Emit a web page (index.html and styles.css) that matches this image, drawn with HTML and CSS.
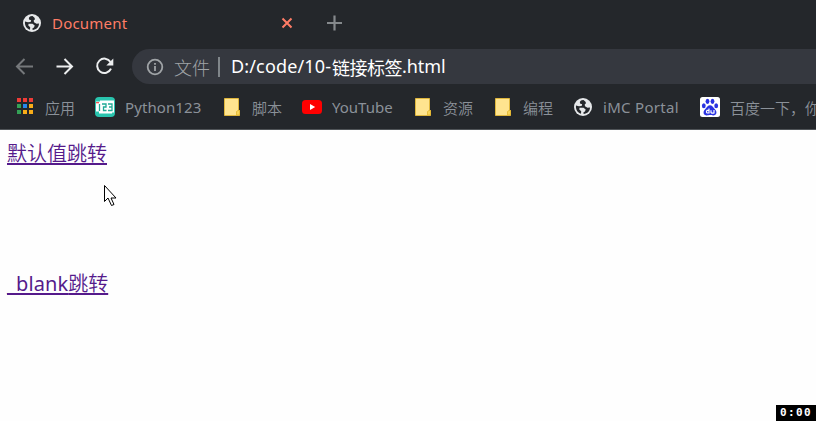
FILE: index.html
```html
<!DOCTYPE html>
<html lang="zh-CN">
<head>
<meta charset="utf-8">
<title>Document</title>
<link rel="stylesheet" href="styles.css">
</head>
<body>
<svg class="defs" width="0" height="0">
  <symbol id="globe" viewBox="0 0 20 20">
    <circle cx="10" cy="10" r="9" fill="#e6e8ea"/>
    <path d="M10.500 3C7.500 3 6.500 4.500 7 6.500L9.200 7.200L8.600 9L6 9.200L3 8.500C2.500 12.500 4.500 15.500 8 16.700L8.200 14.300L6.300 12.500L6.500 10.800L10.500 10.800L12.700 12.500L12 14.500L10.500 15.200L10.600 17C14.500 16.800 17 13.800 17 10.500L14.500 10.800L12 9.300L11.700 7.600L13 6.200L12.500 4.800Z" fill="#24272b"/>
  </symbol>
  <symbol id="folder" viewBox="0 0 20 20">
    <path d="M2.500 1.500h14v12h1v5h-15z" fill="#ffe48f" stroke="#dfb63c"/>
    <path d="M14.500 18v-3.500l1.500-1h1.500V18z" fill="#f8d558" stroke="#e3b62e" stroke-width=".8"/>
  </symbol>
</svg>
<header class="browser">
  <div class="tabs">
    <svg class="tab-icon"><use href="#globe"/></svg>
    <span class="tab-title">Document</span>
    <svg class="close" viewBox="0 0 12 12"><path d="M1.500 1.500l9 9m0-9l-9 9"/></svg>
    <svg class="plus" viewBox="0 0 16 16"><path d="M8.500 .5v15M1 8h15"/></svg>
  </div>
  <div class="toolbar">
    <svg class="nav dim" viewBox="0 0 20 20"><path d="M18 9.500H3M9.500 2L2 9.500L9.500 17"/></svg>
    <svg class="nav" viewBox="0 0 20 20"><path d="M1.500 9.500h15M9.500 2L17 9.500L9.500 17"/></svg>
    <svg class="nav" viewBox="0 0 20 20"><path d="M15.500 5A7.200 7.200 0 1 0 16 11.700"/><path class="tip" d="M18.300 1.500v7h-7z"/></svg>
    <div class="address">
      <svg class="info" viewBox="0 0 18 18"><circle cx="9" cy="9" r="7.300"/><path d="M9 8v5M9 5v1.800"/></svg>
      <span class="scheme">文件</span><span class="bar"></span><span class="url"><span class="path">D:/code/10-</span><span class="name">链接标签</span><span class="ext">.html</span></span>
    </div>
  </div>
  <nav class="bookmarks">
    <div class="mark"><svg viewBox="0 0 20 20"><path fill="#ee3c37" d="M2 1h4v4H2zM8 1h4v4H8zM14 1h4v4h-4z"/><path fill="#34a156" d="M2 7h4v4H2zM2 13h4v4H2z"/><path fill="#2787ee" d="M8 7h4v4H8z"/><path fill="#f9ad18" d="M14 7h4v4h-4zM8 13h4v4H8zM14 13h4v4h-4z"/></svg><span class="w-cjk">应用</span></div>
    <div class="mark"><svg viewBox="0 0 20 20"><rect width="20" height="20" rx="4" fill="#29c4ae"/><path d="M1 4.500h4v-1h14v12h-2v1H4v-2H1z" fill="#fff"/><path d="M4.500 7v7M7 7h4v3H8.500v3.500h3M13 7h4v6.500h-4M14 10h3" fill="none" stroke="#20a995" stroke-width="1.300"/><path d="M1 5h3v1.300H1z" fill="#f05a55"/></svg><span class="w-python">Python123</span></div>
    <div class="mark"><svg><use href="#folder"/></svg><span class="w-cjk">脚本</span></div>
    <div class="mark"><svg viewBox="0 0 20 20"><rect y="3" width="20" height="14" rx="3.500" fill="#f00"/><path d="M8 7l5.200 3L8 13z" fill="#fff"/></svg><span class="w-youtube">YouTube</span></div>
    <div class="mark"><svg><use href="#folder"/></svg><span class="w-cjk">资源</span></div>
    <div class="mark"><svg><use href="#folder"/></svg><span class="w-cjk">编程</span></div>
    <div class="mark"><svg><use href="#globe"/></svg><span class="w-imc">iMC Portal</span></div>
    <div class="mark"><svg viewBox="0 0 20 20"><rect width="20" height="20" rx="2.500" fill="#fff"/><g fill="#2932e1"><ellipse cx="3.800" cy="8.800" rx="1.900" ry="2.500"/><ellipse cx="7.500" cy="4.300" rx="1.900" ry="2.600"/><ellipse cx="12.500" cy="4.300" rx="1.900" ry="2.600"/><ellipse cx="16.200" cy="8.800" rx="1.900" ry="2.500"/><path d="M10 8.300c2 0 2.800 1.900 4.200 3.100c3.800 3.200 2.300 7-1 7c-1.300 0-2-.4-3.200-.4s-1.900.4-3.200.4c-3.300 0-4.800-3.800-1-7C7.200 10.200 8 8.300 10 8.300z"/></g><path d="M9 11.500V16H7.200Q5.700 14.700 7.200 13.300H9M11 13.200V15.500Q12.200 16.600 14 16v-3" fill="none" stroke="#fff" stroke-width="1.200"/></svg><span>百度一下，你</span></div>
  </nav>
</header>
<main class="page">
  <a href="#">默认值跳转</a>
  <a href="#"><span class="latin">_blank</span>跳转</a>
</main>
<svg class="cursor" viewBox="0 0 14 22"><path d="M1.500 1.500v16l3.500-3.500l3.500 7.500l2.500-1l-3-6.500h5z"/></svg>
<div class="timer">0:00</div>
</body>
</html>
```
FILE: styles.css
```css
* { box-sizing: border-box; }
body {
  margin: 0;
  width: 816px;
  height: 421px;
  overflow: hidden;
  background: #fefefe;
  font-family: "Noto Sans", "Noto Sans CJK SC", sans-serif;
}
svg { display: block; flex: none; }
.defs { position: absolute; }
.browser {
  height: 130px;
  background: #24272b;
  border-bottom: 1px solid #505458;
  overflow: hidden;
}
.tabs {
  display: flex;
  align-items: center;
  height: 46px;
  padding-left: 22px;
}
.tab-icon { width: 20px; height: 20px; }
.tab-title {
  width: 229px;
  margin-left: 10px;
  color: #ff7c66;
  font-size: 15px;
  letter-spacing: .2px;
}
.close { width: 12px; height: 12px; }
.close path { stroke: #ff7c66; stroke-width: 2; }
.plus { width: 16px; height: 16px; margin-left: 33px; }
.plus path { stroke: #85898c; stroke-width: 2.200; }
.toolbar {
  display: flex;
  align-items: center;
  height: 41px;
  padding-left: 15px;
}
.nav {
  width: 20px;
  height: 20px;
  margin-right: 20px;
  fill: none;
  stroke: #eceeef;
  stroke-width: 2;
}
.nav.dim { stroke: #75787b; }
.nav .tip { fill: #eceeef; stroke: none; }
.nav:nth-child(3) { margin-right: 17px; }
.address {
  display: flex;
  align-items: center;
  flex: 1;
  height: 35px;
  padding-left: 14px;
  border-radius: 18px 0 0 18px;
  background: #35383f;
  font-size: 18px;
  white-space: nowrap;
}
.info {
  width: 18px;
  height: 18px;
  margin-right: 10px;
  fill: none;
  stroke: #a0a4a7;
  stroke-width: 1.800;
}
.scheme { width: 44px; color: #a0a4a7; font-weight: 300; }
.bar { width: 2px; height: 20px; background: #80868a; }
.url { display: flex; margin-left: 11px; color: #fff; }
.path { width: 101px; letter-spacing: .15px; }
.name { width: 70px; letter-spacing: -.5px; }
.ext { letter-spacing: -.1px; }
.bookmarks {
  display: flex;
  gap: 20px;
  height: 40px;
  padding-left: 15px;
}
.mark {
  display: flex;
  align-items: center;
  gap: 10px;
  flex: none;
  color: #8b9199;
  font-size: 15px;
  font-weight: 350;
  white-space: nowrap;
}
.mark svg { width: 20px; height: 20px; }
.w-cjk { width: 30px; }
.w-python { width: 77px; font-weight: 400; letter-spacing: .1px; }
.w-youtube { width: 61px; font-weight: 400; }
.w-imc { width: 77px; font-weight: 400; letter-spacing: .3px; }
.page {
  display: flex;
  flex-direction: column;
  align-items: flex-start;
  gap: 100px;
  padding: 9px 7px;
}
.page a {
  height: 30px;
  color: #551a8b;
  font-size: 20px;
  font-weight: 350;
  line-height: 30px;
  text-decoration: underline;
  text-decoration-thickness: 2px;
  text-underline-offset: 2px;
  text-decoration-skip-ink: none;
}
.latin { font-weight: 400; letter-spacing: .1px; }
.cursor {
  position: absolute;
  left: 103px;
  top: 184px;
  width: 14px;
  height: 22px;
  fill: #fff;
  stroke: #000;
}
.timer {
  position: absolute;
  right: 0;
  bottom: 0;
  width: 40px;
  height: 16px;
  padding-left: 4px;
  background: #000;
  color: #fff;
  font: bold 11px/16px "DejaVu Sans Mono", monospace;
  letter-spacing: 1.400px;
}
```
